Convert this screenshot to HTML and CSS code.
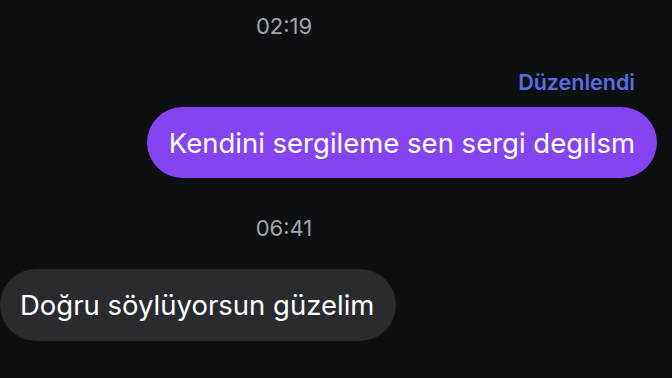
FILE: index.html
```html
<!DOCTYPE html>
<html lang="tr">
<head>
  <meta charset="UTF-8">
  <meta name="viewport" content="width=device-width, initial-scale=1.0">
  <title>Mesajlar</title>
  <link rel="stylesheet" href="styles.css">
</head>
<body>
  <div class="chat">
    <div class="stamp">02:19</div>

    <!-- giden mesaj -->
    <div class="row out">
      <span class="edited">Düzenlendi</span>
      <div class="bubble sent">Kendini sergileme sen sergi degılsm</div>
    </div>

    <div class="stamp second">06:41</div>

    <!-- gelen mesaj -->
    <div class="row in">
      <div class="bubble received">Doğru söylüyorsun güzelim</div>
    </div>
  </div>
</body>
</html>
```

FILE: styles.css
```css
* { box-sizing: border-box; margin: 0; padding: 0; }

body {
  font-family: Inter, "Noto Sans", "DejaVu Sans", sans-serif;
  background: #0d0f13;
  color: #fff;
  width: 672px;
  height: 378px;
  overflow: hidden;
}

.chat {
  display: flex;
  flex-direction: column;
  padding-top: 12px;
}

.stamp {
  text-align: center;
  padding-right: 104px;
  font-size: 22px;
  line-height: 28px;
  color: #a3a6ab;
}

.stamp.second {
  margin-top: 36px;
}

.row {
  display: flex;
  flex-direction: column;
}

.row.out {
  align-items: flex-end;
  padding-right: 15px;
  margin-top: 30px;
}

.row.in {
  align-items: flex-start;
  margin-top: 27px;
}

.edited {
  font-size: 21.5px;
  line-height: 24px;
  font-weight: 600;
  color: #5a6ce0;
  padding-right: 22px;
  margin-bottom: 13px;
}

.bubble {
  display: flex;
  align-items: center;
  height: 71px;
  padding: 0 22px;
  border-radius: 36px;
  font-size: 27.5px;
  white-space: nowrap;
}

.bubble.sent {
  background: #8444f1;
}

.bubble.received {
  background: #2a2b2f;
  height: 72px;
  padding: 0 22px 0 20px;
}
```
